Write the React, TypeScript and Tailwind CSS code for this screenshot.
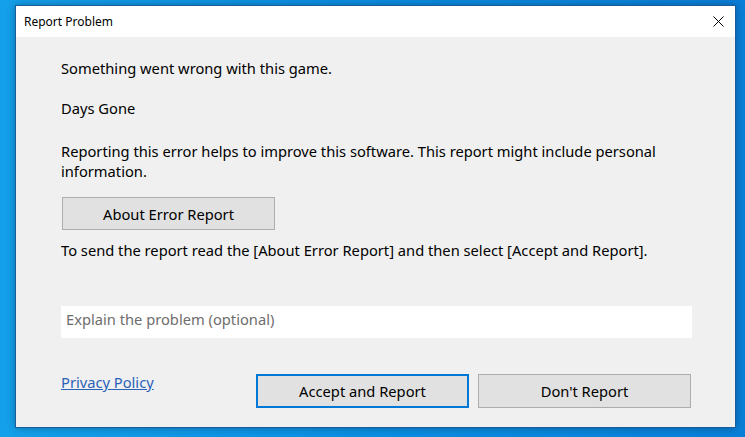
export default function App() {
  return (
    <div className="h-[437px] w-[745px] overflow-hidden bg-[linear-gradient(90deg,#14a0ea_0%,#0a8ee2_50%,#0a7fd8_100%)] pl-[15px] pt-[5px] font-['Noto_Sans',sans-serif]">
      {/* Dialog window */}
      <div className="flex h-[423px] w-[721px] flex-col border border-[#1b5d9c] bg-[#f0f0f0] shadow-[0_0_8px_rgba(0,0,0,0.3)]">
        {/* Title bar */}
        <div className="flex h-[31px] items-center justify-between bg-white pl-[8px] pr-[11px]">
          <span className="text-[12px] text-black">Report Problem</span>
          <svg width="11" height="11" viewBox="0 0 11 11" className="text-black">
            <path d="M0.5 0.5L10.5 10.5M10.5 0.5L0.5 10.5" stroke="currentColor" strokeWidth="1" />
          </svg>
        </div>

        {/* Content */}
        <div className="flex flex-1 flex-col pl-[45px] pr-[43px] text-[14.7px] leading-[20px] text-black">
          <p className="mt-[21px]">Something went wrong with this game.</p>
          <p className="mt-[20px]">Days Gone</p>
          <p className="mt-[23px]">
            Reporting this error helps to improve this software. This report might include personal information.
          </p>
          <button className="ml-px mt-[16px] h-[33px] w-[213px] border border-[#adadad] bg-[#e1e1e1]">
            About Error Report
          </button>
          <p className="mt-[10px]">
            To send the report read the [About Error Report] and then select [Accept and Report].
          </p>

          <div className="mt-[46px] flex h-[32px] w-[631px] items-start bg-white pl-[5px] pt-[3px] text-[#6d6d6d]">
            Explain the problem (optional)
          </div>

          <div className="mt-[36px] flex w-[630px] items-start">
            <a href="#" className="-mt-[2px] flex-1 text-[#2a62b8] underline">
              Privacy Policy
            </a>
            <div className="flex gap-[9px]">
              <button className="h-[34px] w-[213px] border-2 border-[#0078d7] bg-[#e1e1e1]">
                Accept and Report
              </button>
              <button className="h-[34px] w-[213px] border border-[#adadad] bg-[#e1e1e1]">
                Don't Report
              </button>
            </div>
          </div>
        </div>
      </div>
    </div>
  );
}
